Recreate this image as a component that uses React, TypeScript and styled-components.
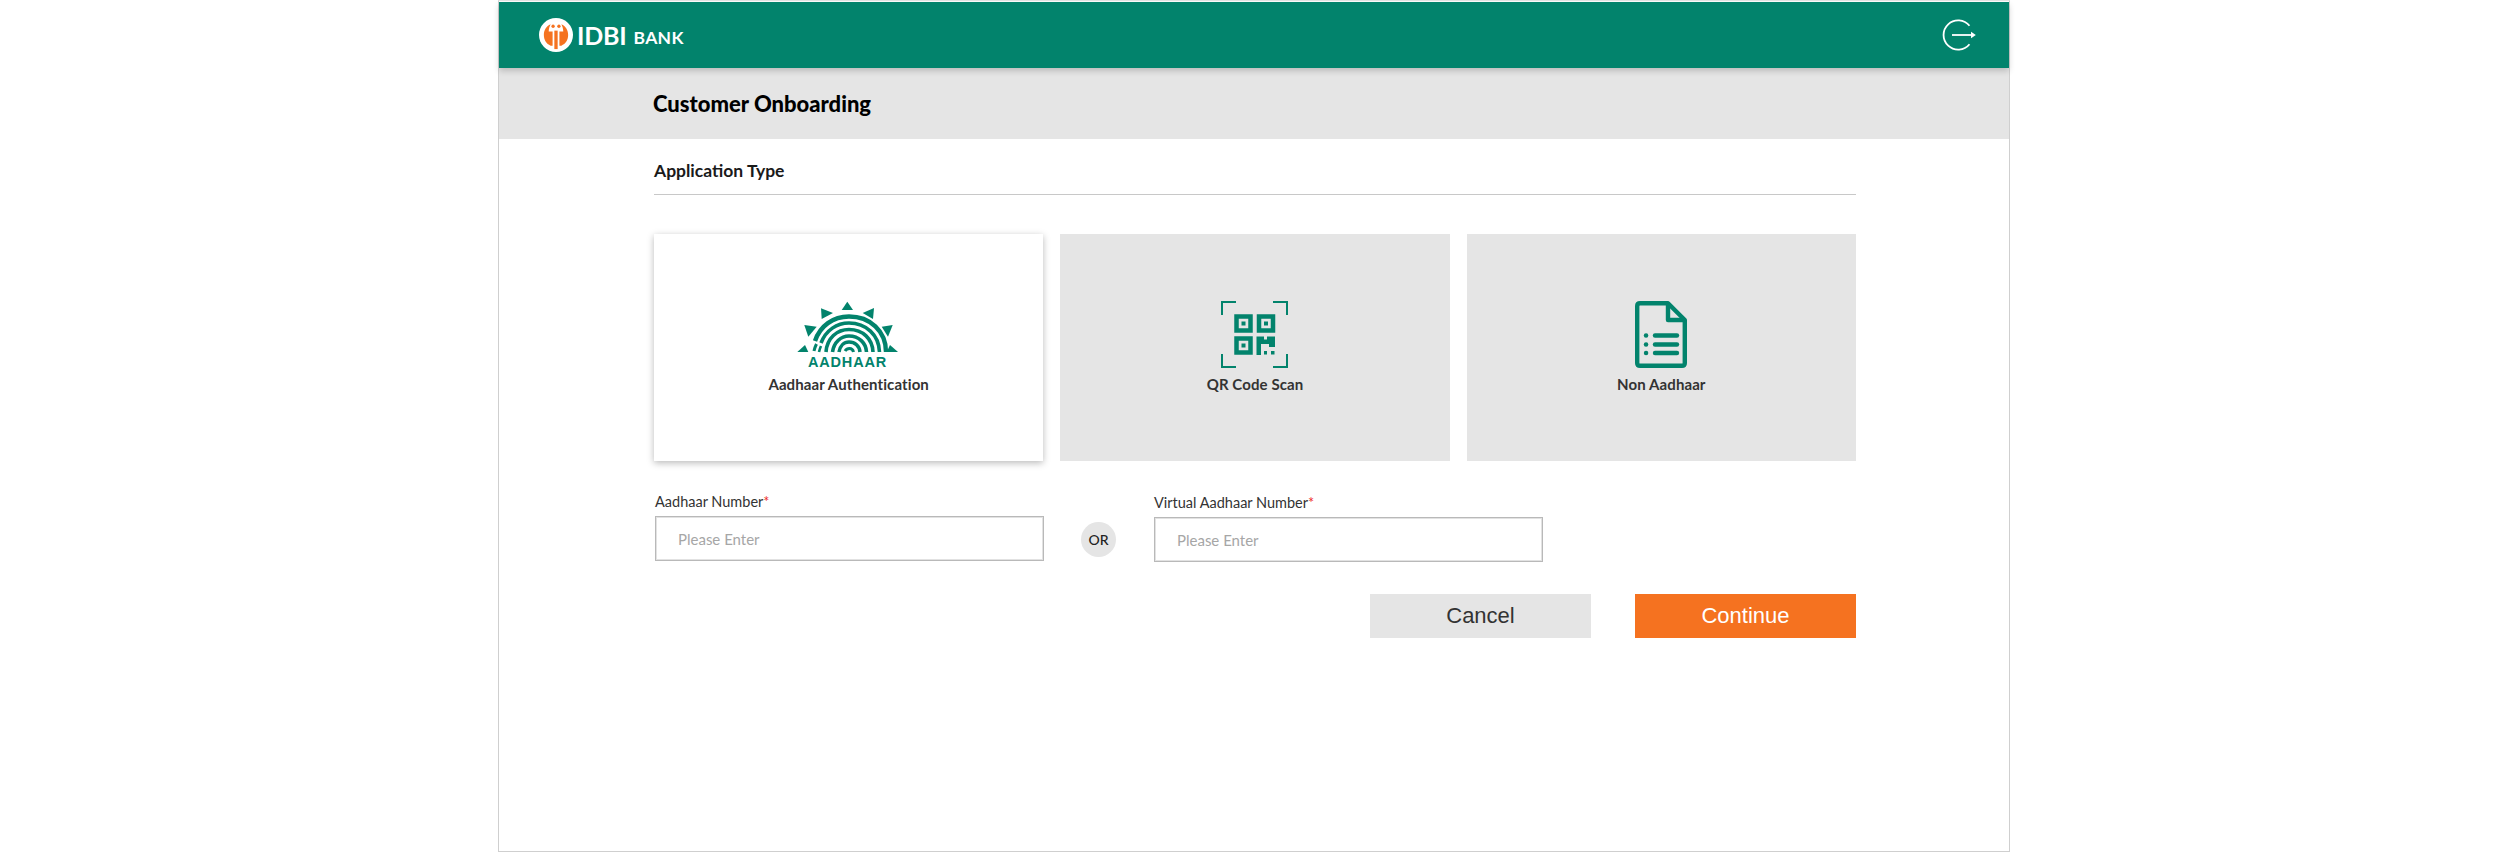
import styled, { createGlobalStyle } from "styled-components";

const GlobalStyle = createGlobalStyle`
  html, body {
    margin: 0;
    padding: 0;
    background: #ffffff;
    font-family: "Lato", "Open Sans", sans-serif;
  }
`;

const Frame = styled.div`
  box-sizing: border-box;
  width: 1512px;
  height: 852px;
  margin: 0 auto;
  border: 1px solid #cfcfcf;
  border-top-color: #e4e4e4;
  padding-top: 1px;
  background: #fff;
`;

const Header = styled.header`
  position: relative;
  display: flex;
  align-items: center;
  justify-content: space-between;
  height: 66px;
  padding: 0 33px 0 40px;
  background: #02836c;
  box-shadow: 0 3px 6px rgba(0, 0, 0, 0.18);
`;

const Logo = styled.div`
  display: flex;
  align-items: center;
  color: #fff;
`;

const LogoMain = styled.span`
  margin-left: 4px;
  font-size: 25px;
  font-weight: 700;
  letter-spacing: -0.2px;
`;

const LogoBank = styled.span`
  margin-left: 7px;
  margin-top: 4px;
  font-size: 17.5px;
  font-weight: 700;
  letter-spacing: 0.3px;
`;

const SubHeader = styled.div`
  display: flex;
  align-items: center;
  height: 71px;
  padding-left: 154px;
  background: #e5e5e5;
`;

const Title = styled.h1`
  margin: 0;
  font-size: 22px;
  font-weight: 900;
  color: #000;
`;

const Content = styled.main`
  width: 1202px;
  margin-left: 155px;
`;

const SectionTitle = styled.div`
  box-sizing: border-box;
  display: flex;
  align-items: center;
  height: 56px;
  padding-top: 8px;
  border-bottom: 1px solid #c8c8c8;
  font-size: 17.5px;
  font-weight: 700;
  color: #1a1a1a;
`;

const Cards = styled.div`
  display: grid;
  grid-template-columns: repeat(3, 1fr);
  gap: 17px;
  margin-top: 39px;
`;

const Card = styled.div<{ $active?: boolean }>`
  display: flex;
  flex-direction: column;
  align-items: center;
  height: 227px;
  padding-top: 67px;
  box-sizing: border-box;
  background: ${(p) => (p.$active ? "#fff" : "#e5e5e5")};
  box-shadow: ${(p) => (p.$active ? "0 2px 7px rgba(0,0,0,0.28)" : "none")};
`;

const IconSlot = styled.div`
  display: flex;
  align-items: flex-start;
  justify-content: center;
  height: 67px;
`;

const CardLabel = styled.div`
  margin-top: 6px;
  font-size: 15px;
  line-height: 20px;
  font-weight: 700;
  letter-spacing: 0.1px;
  color: #333;
`;

const FormRow = styled.div`
  display: flex;
  align-items: flex-start;
  margin: 31px 0 0 1px;
`;

const Field = styled.div<{ $offset?: number }>`
  display: flex;
  flex-direction: column;
  width: 389px;
  padding-top: ${(p) => p.$offset ?? 0}px;
`;

const FieldLabel = styled.label`
  height: 24px;
  font-size: 14.5px;
  line-height: 20px;
  color: #333;
`;

const Required = styled.span`
  color: #ee2b2b;
`;

const Input = styled.input`
  box-sizing: border-box;
  width: 389px;
  height: 45px;
  padding: 0 22px;
  border: 1px solid #b9b9b9;
  box-shadow: inset 0 0 0 1px #e2e2e2;
  font-family: inherit;
  font-size: 15px;
  background: #fff;
  outline: none;

  &::placeholder {
    color: #a6a6a6;
    opacity: 1;
  }
`;

const OrBadge = styled.div`
  display: flex;
  align-items: center;
  justify-content: center;
  width: 35px;
  height: 35px;
  margin: 30px 38px 0 37px;
  border-radius: 50%;
  background: #e5e5e5;
  font-size: 14px;
  font-weight: 500;
  color: #222;
`;

const Actions = styled.div`
  display: flex;
  justify-content: flex-end;
  gap: 44px;
  margin-top: 32px;
`;

const ActionButton = styled.button<{ $primary?: boolean }>`
  width: 221px;
  height: 44px;
  border: none;
  font-family: "Liberation Sans", Arial, sans-serif;
  font-size: 22px;
  background: ${(p) => (p.$primary ? "#f57220" : "#e5e5e5")};
  color: ${(p) => (p.$primary ? "#fff" : "#333")};
`;

const IdbiMark = () => (
  <svg width="34" height="34" viewBox="0 0 35 35">
    <circle cx="17.500" cy="17.500" r="17.500" fill="#fff" />
    <path d="M12 6.500C7.500 8.500 5 12.500 5 17.500S7.500 26.500 12 28.500L14 28.500L14 14L10 14C10 11 11 8.500 12 6.500Z" fill="#f57220" />
    <path d="M23 6.500C27.500 8.500 30 12.500 30 17.500S27.500 26.500 23 28.500L21 28.500L21 14L25 14C25 11 24 8.500 23 6.500Z" fill="#f57220" />
    <rect x="15.800" y="13" width="3.400" height="19" fill="#f57220" />
    <circle cx="14.500" cy="8.500" r="1.700" fill="#f57220" />
    <circle cx="20.500" cy="8.500" r="1.700" fill="#f57220" />
  </svg>
);

const LogoutIcon = () => (
  <svg width="34" height="32" viewBox="0 0 34 32" fill="none" stroke="#fff" strokeWidth="1.800">
    <path d="M27.500 6.800A14.600 14.600 0 1 0 27.500 25.200" />
    <path d="M10 16H30" />
    <path d="M29 12.800L33.800 16L29 19.200Z" fill="#fff" stroke="none" />
  </svg>
);

const AadhaarIcon = () => (
  <svg width="106" height="72" viewBox="1 0 106 72" fill="none">
    <g fill="#02836c">
      <path d="M52.300 0.700L58 9H46.700Z" />
      <path d="M26 7.300L38 12L26.700 18Z" />
      <path d="M79 7L67.700 12L78 18Z" />
      <path d="M9.300 24L21.700 25.700L13.300 35.700Z" />
      <path d="M97.700 24L86.700 25.700L93 35.700Z" />
      <path d="M2.300 51L10 44L13.300 51Z" />
      <path d="M103 51L95 44L91.700 51Z" />
    </g>
    <g stroke="#02836c" fill="none" strokeWidth="3.600">
      <path d="M20 40C25 25 38 15.500 54 15.500C75 15.500 91 30 91 51" strokeWidth="4.400" />
      <path d="M19 50C19.500 47 20.500 45 21.500 43" strokeWidth="3" />
      <path d="M26 42C31 29 42 22 54 22C71 22 84 34 84.500 51" />
      <path d="M24 51C24.500 49 25 47 26 45" strokeWidth="2.600" />
      <path d="M31 51C32 37 42 28.500 54 28.500C68 28.500 77.500 38 78 51" />
      <path d="M37.500 51C39 41 46 35 54 35C64 35 71 42 71.500 51" />
      <path d="M44 51C45 45 49 41 54 41C60 41 64.500 45 65 51" />
      <path d="M50 50C51 48.500 52.500 47.500 54.500 47.500C56.500 47.500 58 49 58.500 51" strokeWidth="3" />
    </g>
    <text x="52.500" y="66" textAnchor="middle" fill="#02836c" fontFamily="Liberation Sans, sans-serif" fontSize="14.500" fontWeight="700" letterSpacing="0.800">
      AADHAAR
    </text>
  </svg>
);

const QrIcon = () => (
  <svg width="67" height="67" viewBox="0 0 67 67" fill="none">
    <g stroke="#02836c" strokeWidth="2">
      <path d="M1 14V1H15" />
      <path d="M52 1H66V14" />
      <path d="M1 53V66H15" />
      <path d="M52 66H66V53" />
    </g>
    <g stroke="#02836c" strokeWidth="4.500">
      <rect x="15.500" y="15.500" width="14" height="14" />
      <rect x="38" y="15.500" width="14" height="14" />
      <rect x="15.500" y="37.500" width="14" height="14" />
    </g>
    <g fill="#02836c">
      <rect x="20.500" y="20.500" width="4" height="4" />
      <rect x="43" y="20.500" width="4" height="4" />
      <rect x="20.500" y="42.500" width="4" height="4" />
      <path d="M35.500 35.500H43V38.500H46V35.500H54V46H48V43H40V54H35.500Z" />
      <rect x="43" y="50" width="3" height="3.500" />
      <rect x="50" y="50" width="3.500" height="3.500" />
    </g>
  </svg>
);

const DocIcon = () => (
  <svg width="52" height="67" viewBox="0 0 52 67" fill="none" stroke="#02836c" strokeWidth="4.400" strokeLinejoin="round">
    <path d="M33 2.200H5Q2.200 2.200 2.200 5V62Q2.200 64.800 5 64.800H47Q49.800 64.800 49.800 62V19Z" />
    <path d="M33 2.200V19H49.800" />
    <g strokeLinecap="round">
      <path d="M20 34.500H42" />
      <path d="M20 43.500H42" />
      <path d="M20 52H42" />
      <path d="M11 34.500H11.100" />
      <path d="M11 43.500H11.100" />
      <path d="M11 52H11.100" />
    </g>
  </svg>
);

export default function App() {
  return (
    <>
      <GlobalStyle />
      <Frame>
        <Header>
          <Logo>
            <IdbiMark />
            <LogoMain>IDBI</LogoMain>
            <LogoBank>BANK</LogoBank>
          </Logo>
          <LogoutIcon />
        </Header>
        <SubHeader>
          <Title>Customer Onboarding</Title>
        </SubHeader>
        <Content>
          <SectionTitle>Application Type</SectionTitle>
          <Cards>
            <Card $active>
              <IconSlot>
                <AadhaarIcon />
              </IconSlot>
              <CardLabel>Aadhaar Authentication</CardLabel>
            </Card>
            <Card>
              <IconSlot>
                <QrIcon />
              </IconSlot>
              <CardLabel>QR Code Scan</CardLabel>
            </Card>
            <Card>
              <IconSlot>
                <DocIcon />
              </IconSlot>
              <CardLabel>Non Aadhaar</CardLabel>
            </Card>
          </Cards>
          <FormRow>
            <Field>
              <FieldLabel>
                Aadhaar Number<Required>*</Required>
              </FieldLabel>
              <Input placeholder="Please Enter" />
            </Field>
            <OrBadge>OR</OrBadge>
            <Field $offset={1}>
              <FieldLabel>
                Virtual Aadhaar Number<Required>*</Required>
              </FieldLabel>
              <Input placeholder="Please Enter" />
            </Field>
          </FormRow>
          <Actions>
            <ActionButton>Cancel</ActionButton>
            <ActionButton $primary>Continue</ActionButton>
          </Actions>
        </Content>
      </Frame>
    </>
  );
}
